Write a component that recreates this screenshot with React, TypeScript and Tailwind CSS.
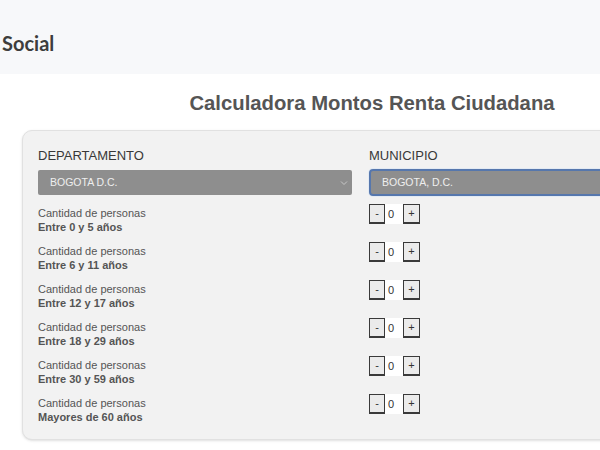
import React from "react";

const AGE_GROUPS = [
  "Entre 0 y 5 años",
  "Entre 6 y 11 años",
  "Entre 12 y 17 años",
  "Entre 18 y 29 años",
  "Entre 30 y 59 años",
  "Mayores de 60 años",
];

const Stepper = () => (
  <div className="flex h-[20px] items-stretch">
    <button className="h-[20px] w-[16px] border border-[#3a3a3a] border-b-2 bg-[#ebebeb] text-[11px] leading-none text-[#333]">
      -
    </button>
    <div className="h-[20px] w-[18px] bg-white pl-[3px] text-[11px] leading-[20px] text-[#333]">0</div>
    <button className="h-[20px] w-[17px] border border-[#3a3a3a] border-b-2 bg-[#ebebeb] text-[11px] leading-none text-[#333]">
      +
    </button>
  </div>
);

const App = () => {
  return (
    <div className="w-[600px] h-[450px] overflow-hidden bg-white font-['Liberation_Sans',Arial,sans-serif]">
      <div className="h-[74px] bg-[#f7f8fa] flex items-center">
        <h2 className="font-['Lato',sans-serif] font-bold text-[20px] text-[#3d3d3d] pl-[2px] pt-[12px]">
          Social
        </h2>
      </div>

      <div className="w-[744px]">
        <h1 className="mt-[17px] mb-[15px] text-center text-[20.3px] leading-[24px] font-bold text-[#555]">
          Calculadora Montos Renta Ciudadana
        </h1>

        <div className="ml-[22px] w-[678px] rounded-[10px] border border-[#e1e1e1] bg-[#f2f2f2] shadow-sm pl-[15px] pr-[15px] pt-[17px] pb-[25px]">
          <div className="grid grid-cols-[314px_314px] gap-x-[17px]">
            <div>
              <p className="text-[13px] leading-[16px] text-[#383838]">DEPARTAMENTO</p>
              <div className="mt-[6px] flex h-[25px] items-center justify-between rounded-[2px] bg-[#8e8e8e] pl-[12px] pr-[4px]">
                <span className="text-[10.5px] text-[#eeeeee]">BOGOTA D.C.</span>
                <svg width="8" height="6" viewBox="0 0 8 6" fill="none">
                  <path d="M1 1.5 L4 4.5 L7 1.5" stroke="#c8c8c8" strokeWidth="1" />
                </svg>
              </div>
            </div>
            <div>
              <p className="text-[13px] leading-[16px] text-[#383838]">MUNICIPIO</p>
              <div className="mt-[5px] flex h-[27px] items-center rounded-[4px] border-2 border-[#5677ad] bg-[#8e8e8e] pl-[11px] ring-1 ring-[#e3eaf3]">
                <span className="text-[10.5px] text-[#eeeeee]">BOGOTA, D.C.</span>
              </div>
            </div>
          </div>

          <div className="mt-[8px] flex flex-col gap-[18px]">
            {AGE_GROUPS.map((group) => (
              <div key={group} className="grid grid-cols-[314px_314px] gap-x-[17px] h-[20px]">
                <div className="text-[11px] leading-[14px] text-[#555] pt-[2px]">
                  <p>Cantidad de personas</p>
                  <p className="font-bold">{group}</p>
                </div>
                <Stepper />
              </div>
            ))}
          </div>
        </div>
      </div>
    </div>
  );
};

export default App;
